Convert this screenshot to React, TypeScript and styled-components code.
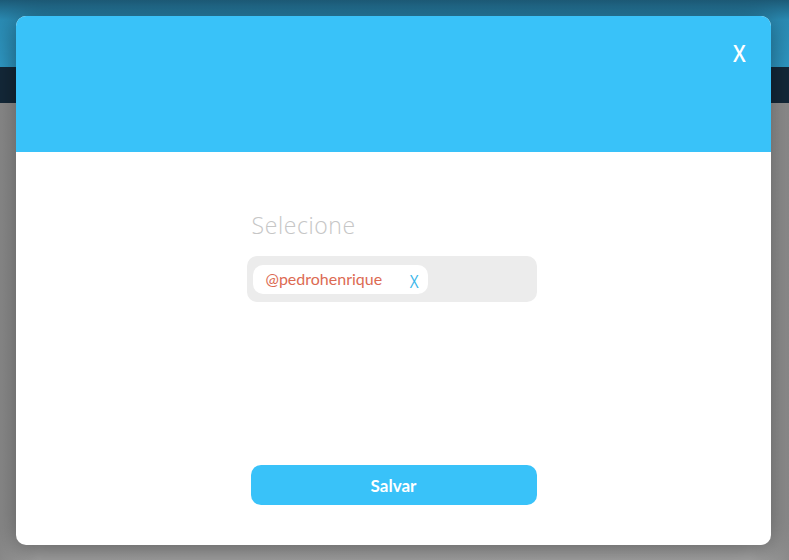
import React from "react";
import styled, { createGlobalStyle } from "styled-components";

const Global = createGlobalStyle`
  html, body { margin: 0; padding: 0; }
  body { font-family: Lato, "Open Sans", sans-serif; width: 789px; height: 560px; overflow: hidden; }
`;

const Page = styled.div`
  position: relative;
  width: 789px;
  height: 560px;
  display: grid;
  grid-template-rows: 67px 36px 1fr;
  background: #9c9c9c;
  overflow: hidden;
`;

const TopBar = styled.div`
  background: linear-gradient(180deg, #1d5b78 0%, #2b8db6 30%, #2f9ac6 100%);
`;

const NavBar = styled.div`
  background: #14293a;
`;

const Content = styled.div`
  background: linear-gradient(90deg, #8a8a8a 0%, #a4a4a4 5%, #a8a8a8 95%, #8c8c8c 100%);
`;

const Overlay = styled.div`
  position: absolute;
  inset: 0;
  padding: 16px 18px 15px 16px;
  display: flex;
`;

const Modal = styled.div`
  flex: 1;
  display: flex;
  flex-direction: column;
  background: #ffffff;
  border-radius: 10px;
  overflow: hidden;
  box-shadow: 0 4px 28px rgba(0, 0, 0, 0.45);
`;

const Header = styled.div`
  height: 136px;
  background: #39c2f9;
  display: flex;
  justify-content: flex-end;
  align-items: flex-start;
  padding: 25px 24px 0 0;
  box-sizing: border-box;
`;

const CloseButton = styled.button`
  border: none;
  background: transparent;
  color: #ffffff;
  font-family: "Open Sans", sans-serif;
  font-size: 24px;
  font-weight: 600;
  padding: 0;
  line-height: 24px;
  cursor: pointer;
  transform: scaleX(0.85);
`;

const Body = styled.div`
  flex: 1;
  display: flex;
  flex-direction: column;
  align-items: center;
  padding-top: 58px;
`;

const Column = styled.div`
  width: 290px;
  margin-left: -4px;
  display: flex;
  flex-direction: column;
`;

const Label = styled.div`
  font-family: "Open Sans", sans-serif;
  font-weight: 300;
  font-size: 23px;
  letter-spacing: 0.6px;
  color: #c6c6c6;
  padding-left: 5px;
  line-height: 30px;
  margin-bottom: 16px;
`;

const SelectBox = styled.div`
  height: 46px;
  background: #ececec;
  border-radius: 10px;
  display: flex;
  align-items: center;
  padding: 0 6px;
`;

const Chip = styled.div`
  height: 29px;
  width: 175px;
  box-sizing: border-box;
  background: #ffffff;
  border-radius: 10px;
  display: flex;
  align-items: center;
  justify-content: space-between;
  padding: 0 8px 0 13px;
`;

const ChipText = styled.span`
  font-family: Lato, sans-serif;
  font-size: 16px;
  color: #dc6a52;
  margin-top: -2px;
`;

const ChipRemove = styled.span`
  font-family: "Open Sans", sans-serif;
  font-size: 18px;
  color: #3ab6ea;
  transform: scaleX(0.85);
  margin-top: 3px;
`;

const Spacer = styled.div`
  height: 163px;
`;

const SaveButton = styled.button`
  align-self: flex-end;
  width: 286px;
  height: 40px;
  border: none;
  border-radius: 10px;
  background: #39c2f9;
  color: #ffffff;
  font-family: Lato, sans-serif;
  font-weight: 700;
  font-size: 17px;
  cursor: pointer;
`;

export default function App() {
  return (
    <>
      <Global />
      <Page>
        <TopBar />
        <NavBar />
        <Content />
        <Overlay>
          <Modal>
            <Header>
              <CloseButton>X</CloseButton>
            </Header>
            <Body>
              <Column>
                <Label>Selecione</Label>
                <SelectBox>
                  <Chip>
                    <ChipText>@pedrohenrique</ChipText>
                    <ChipRemove>X</ChipRemove>
                  </Chip>
                </SelectBox>
                <Spacer />
                <SaveButton>Salvar</SaveButton>
              </Column>
            </Body>
          </Modal>
        </Overlay>
      </Page>
    </>
  );
}
